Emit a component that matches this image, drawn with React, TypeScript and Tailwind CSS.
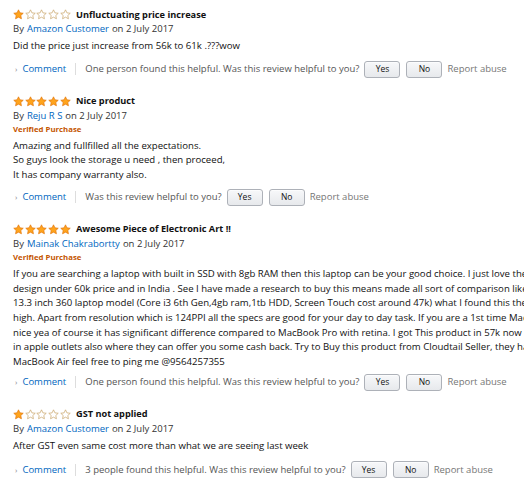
import React from "react";

const FONT = { fontFamily: '"Open Sans", "Noto Sans", Arial, sans-serif' };

function Star({ filled }: { filled: boolean }) {
  return (
    <svg width="11" height="11" viewBox="0 0 24 24" className="block">
      <path
        d="M12 1.8l3.1 6.6 7.2.9-5.3 4.9 1.4 7.1L12 17.8l-6.4 3.5 1.4-7.1L1.7 9.3l7.2-.9z"
        fill={filled ? "#FFA41C" : "#ffffff"}
        stroke={filled ? "#E47911" : "#C9A66B"}
        strokeWidth="1.6"
        strokeLinejoin="round"
      />
    </svg>
  );
}

function Stars({ n }: { n: number }) {
  return (
    <div className="flex items-center gap-[0.7px] w-[60px]">
      {[0, 1, 2, 3, 4].map((i) => (
        <Star key={i} filled={i < n} />
      ))}
    </div>
  );
}

function Btn({ label }: { label: string }) {
  return (
    <div className="h-[17px] w-[36px] flex items-center justify-center rounded-[3px] border border-[#adb1b8] bg-gradient-to-b from-[#f7f8fa] to-[#e7e9ec] text-[8.5px] text-[#111] shadow-[inset_0_1px_0_rgba(255,255,255,0.6)]">
      {label}
    </div>
  );
}

type Review = {
  stars: number;
  title: string;
  author: string;
  verified: boolean;
  body: string[];
  helpful?: string;
  gap: string;
};

const reviews: Review[] = [
  {
    stars: 1,
    title: "Unfluctuating price increase",
    author: "Amazon Customer",
    verified: false,
    body: ["Did the price just increase from 56k to 61k .???wow"],
    helpful: "One person found this helpful.",
    gap: "mt-[6px]",
  },
  {
    stars: 5,
    title: "Nice product",
    author: "Reju R S",
    verified: true,
    body: [
      "Amazing and fullfilled all the expectations.",
      "So guys look the storage u need , then proceed,",
      "It has company warranty also.",
    ],
    gap: "mt-[5px]",
  },
  {
    stars: 5,
    title: "Awesome Piece of Electronic Art !!",
    author: "Mainak Chakrabortty",
    verified: true,
    body: [
      "If you are searching a laptop with built in SSD with 8gb RAM then this laptop can be your good choice. I just love the design and build",
      "design under 60k price and in India . See I have made a research to buy this means made all sort of comparison like Green Dell",
      "13.3 inch 360 laptop model (Core i3 6th Gen,4gb ram,1tb HDD, Screen Touch cost around 47k) what I found this the Core i5 is",
      "high. Apart from resolution which is 124PPI all the specs are good for your day to day task. If you are a 1st time Mac user then",
      "nice yea of course it has significant difference compared to MacBook Pro with retina. I got This product in 57k now I think it",
      "in apple outlets also where they can offer you some cash back. Try to Buy this product from Cloudtail Seller, they have good",
      "MacBook Air feel free to ping me @9564257355",
    ],
    helpful: "One person found this helpful.",
    gap: "mt-[3px]",
  },
  {
    stars: 1,
    title: "GST not applied",
    author: "Amazon Customer",
    verified: false,
    body: ["After GST even same cost more than what we are seeing last week"],
    helpful: "3 people found this helpful.",
    gap: "mt-[7px]",
  },
];

function ReviewBlock({ r }: { r: Review }) {
  return (
    <div className="flex flex-col">
      <div className="flex items-center h-[15px]">
        <Stars n={r.stars} />
        <span className="ml-[3px] font-bold text-[9.2px] text-[#111] whitespace-nowrap">{r.title}</span>
      </div>
      <div className="flex items-center h-[15px] text-[9.5px] whitespace-nowrap">
        <span className="text-[#333]">By</span>
        <span className="ml-[3px] text-[#0066c0]">{r.author}</span>
        <span className="ml-[3px] text-[#333]">on 2 July 2017</span>
      </div>
      {r.verified && (
        <div className="h-[13px] flex items-center text-[7.8px] font-bold text-[#c45500] whitespace-nowrap">
          Verified Purchase
        </div>
      )}
      <div className="mt-[2px] flex flex-col text-[9.6px] leading-[14.7px] text-[#111]">
        {r.body.map((l, i) => (
          <div key={i} className="whitespace-nowrap">
            {l}
          </div>
        ))}
      </div>
      <div className={`${r.gap} h-[19px] flex items-center text-[9.5px] whitespace-nowrap`}>
        <span className="ml-[2px] text-[8px] text-[#888]">›</span>
        <span className="ml-[5px] text-[#0066c0]">Comment</span>
        <span className="ml-[9px] w-px h-[12px] bg-[#ddd]" />
        <span className="ml-[9px] text-[#555]">
          {r.helpful ? r.helpful + " " : ""}Was this review helpful to you?
        </span>
        <div className="ml-[5px] flex items-center gap-[6px]">
          <Btn label="Yes" />
          <Btn label="No" />
        </div>
        <span className="ml-[5px] text-[#767676]">Report abuse</span>
      </div>
    </div>
  );
}

export default function App() {
  return (
    <div style={FONT} className="w-[524px] h-[480px] overflow-hidden bg-white">
      <div className="pl-[13px] pt-[7px] flex flex-col gap-[15px]">
        {reviews.map((r, i) => (
          <ReviewBlock key={i} r={r} />
        ))}
      </div>
    </div>
  );
}
